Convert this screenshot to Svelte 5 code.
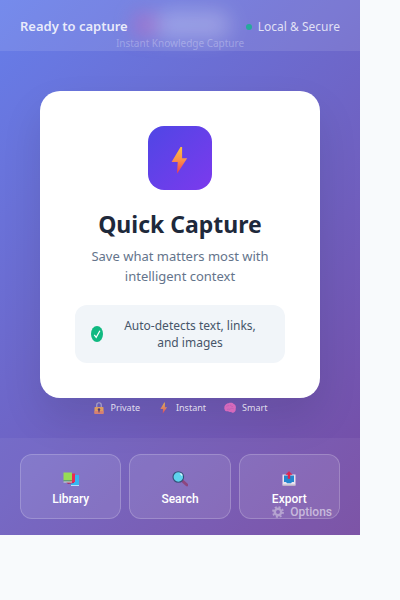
<script>
  const features = [
    { icon: 'lock', label: 'Private' },
    { icon: 'bolt', label: 'Instant' },
    { icon: 'brain', label: 'Smart' }
  ];
  const actions = [
    { icon: 'books', label: 'Library' },
    { icon: 'search', label: 'Search' },
    { icon: 'export', label: 'Export' }
  ];
</script>

{#snippet glyph(name)}
  <svg class="glyph" viewBox="0 0 16 16" aria-hidden="true">
    {#if name === 'lock'}
      <path d="M5 7V4a3 3 0 0 1 6 0V7" fill="none" stroke="#b9b4c9" stroke-width="1.600" />
      <rect x="2" y="6.500" width="12" height="9.500" rx="1" fill="#fbae4c" />
      <path d="M2 12h12v3a1 1 0 0 1-1 1H3a1 1 0 0 1-1-1z" fill="#f28a62" />
      <circle cx="8" cy="10" r="1.600" fill="#4c315c" />
      <path d="M7.300 10h1.400v4H7.300z" fill="#4c315c" />
    {:else if name === 'bolt'}
      <path d="M9.200.6H8.300L3.200 9.200h3.500L6.300 15.800 12.100 7H9.200z" fill="url(#bolt-fill)" />
    {:else if name === 'brain'}
      <path d="M.500 8C0 5 3 1.500 6 1.500c3-1 6-.5 7 1.300 2.500 1 3.500 4 2.500 6.200.5 2-.5 4.500-2.500 5-1.500.8-3 0-3.500-1-1.500.5-3 .3-4-.6-2.500.4-4.500-.4-4.500-2.400C.3 9.500.300 9 .500 8z" fill="#f06fc0" />
      <path d="M3 6c2-2 3 0 4-2m1 0c2 0 1 3 4 2M4 10c2-2 3 1 5-1 1-1 3 0 4 0" fill="none" stroke="#cf60b8" stroke-width="1" />
    {:else if name === 'books'}
      <path d="M8 4h8v10H8z" fill="#35b5f2" />
      <path d="M8 14h8v1H8z" fill="#b8e2fa" />
      <path d="m3 11 8-.5V12l-6 1z" fill="#a82b62" />
      <path d="M6 2.500h6v8.500l-5 1z" fill="#e92c55" />
      <path d="M.500 1.500h8.500v8H.500z" fill="#97dc55" />
      <path d="M.500 9.500h8.500v1H.500z" fill="#3d9a55" />
      <path d="M.500 10.500h8.500v1H.500z" fill="#d7e4d0" />
    {:else if name === 'search'}
      <path d="m10.500 10 4.500 4" stroke="#8d467f" stroke-width="3" stroke-linecap="round" />
      <circle cx="6.300" cy="6" r="5.300" fill="#5ed3ee" stroke="#354f78" stroke-width="1.100" />
      <path d="M8 3.200a1 1 0 0 1 1.500 1.600" fill="none" stroke="#d8f7ff" stroke-width="1.300" />
    {:else}
      <path d="M1.500 3.500h13V14a1 1 0 0 1-1 1h-11a1 1 0 0 1-1-1z" fill="#e8e3ef" />
      <path d="M3 4.500h10V11h-2l-1 1.200H6L5 11H3z" fill="#2586cf" />
      <path d="M2 13.500h12V15H2z" fill="#beb3c7" />
      <path d="M8 .500 5 3.500h2v4h2v-4h2z" fill="#df244f" stroke="#df244f" stroke-width=".5" />
    {/if}
  </svg>
{/snippet}

<svg class="defs" aria-hidden="true">
  <defs>
    <linearGradient id="bolt-fill" x1="0" y1="0" x2="0" y2="1">
      <stop offset="0" stop-color="#fdc13f" />
      <stop offset="0.500" stop-color="#fb8f4b" />
      <stop offset="1" stop-color="#f2394f" />
    </linearGradient>
  </defs>
</svg>

<div class="popup">
  <div class="brand-glow" aria-hidden="true"><span class="pink"></span><span class="white"></span></div>
  <header>
    <strong>Ready to capture</strong>
    <span class="status"><i></i>Local &amp; Secure</span>
  </header>
  <p class="tagline">Instant Knowledge Capture</p>

  <main>
    <section class="card">
      <div class="badge">{@render glyph('bolt')}</div>
      <h1>Quick Capture</h1>
      <p class="lead">Save what matters most with intelligent context</p>
      <div class="note">
        <svg class="check" viewBox="0 0 12 16" aria-hidden="true">
          <ellipse cx="6" cy="8" rx="6" ry="8" fill="#10b981" />
          <path d="m3.300 8.800 1.900 2.500L8.900 4.700" fill="none" stroke="#fff" stroke-width="1.200" />
        </svg>
        <span>Auto-detects text, links, and images</span>
      </div>
    </section>
    <ul class="features">
      {#each features as item}
        <li>{@render glyph(item.icon)}{item.label}</li>
      {/each}
    </ul>
  </main>

  <footer>
    {#each actions as item}
      <button type="button" class="action">{@render glyph(item.icon)}{item.label}</button>
    {/each}
  </footer>

  <button type="button" class="options">
    <svg viewBox="0 0 12 12" aria-hidden="true">
      <circle cx="6" cy="6" r="3.200" fill="none" stroke="#e3deea" stroke-width="2.400" />
      <circle cx="6" cy="6" r="5" fill="none" stroke="#e3deea" stroke-width="1.800" stroke-dasharray="2 1.927" />
    </svg>
    Options
  </button>
</div>

<style>
  :global(body) {
    margin: 0;
    background: #f8fafc;
    font-family: "Noto Sans", "Open Sans", sans-serif;
  }
  .defs {
    position: absolute;
    width: 0;
    height: 0;
  }
  .popup {
    position: relative;
    max-width: 360px;
    overflow: hidden;
    color: #fff;
    background: linear-gradient(135deg, #667eea 0%, #764ba2 100%);
  }
  header {
    position: relative;
    display: flex;
    justify-content: space-between;
    align-items: center;
    padding: 17px 20px 15px;
    background: rgba(255, 255, 255, 0.1);
    line-height: 19px;
    color: rgba(255, 255, 255, 0.85);
  }
  header strong {
    font-size: 13px;
    font-weight: 600;
  }
  .status {
    display: flex;
    align-items: center;
    gap: 6px;
    font-size: 12px;
    color: rgba(255, 255, 255, 0.78);
  }
  .status i {
    width: 6px;
    height: 6px;
    border-radius: 50%;
    background: #26aa9b;
  }
  .brand-glow {
    position: absolute;
    top: 0;
    left: 134px;
    display: flex;
    align-items: center;
    height: 50px;
    filter: blur(10px);
  }
  .pink {
    width: 22px;
    height: 22px;
    border-radius: 50%;
    background: rgba(220, 80, 170, 0.5);
  }
  .white {
    width: 74px;
    height: 28px;
    border-radius: 12px;
    background: rgba(255, 255, 255, 0.26);
  }
  .tagline {
    position: absolute;
    top: 36px;
    left: 0;
    right: 0;
    margin: 0;
    text-align: center;
    font-size: 10px;
    line-height: 14px;
    color: rgba(255, 255, 255, 0.28);
  }
  main {
    padding: 40px 40px 24px;
  }
  .card {
    padding: 35px;
    border-radius: 20px;
    background: #fff;
    box-shadow: 0 20px 40px rgba(0, 0, 0, 0.1);
    text-align: center;
  }
  .badge {
    display: grid;
    place-items: center;
    box-sizing: border-box;
    width: 64px;
    height: 64px;
    margin: 0 auto 18px;
    padding-top: 4px;
    border-radius: 16px;
    background: linear-gradient(135deg, #4f46e5, #7c3aed);
  }
  .badge .glyph {
    width: 28px;
    height: 28px;
  }
  h1 {
    margin: 0 0 6px;
    font-size: 23px;
    line-height: 32px;
    font-weight: 700;
    white-space: nowrap;
    color: #1e293b;
  }
  .lead {
    margin: 0 0 19px;
    font-size: 13px;
    line-height: 20px;
    color: #64748b;
  }
  .note {
    display: flex;
    align-items: center;
    gap: 8px;
    padding: 12px 16px;
    border-radius: 12px;
    background: #f1f5f9;
    font-size: 12px;
    line-height: 17px;
    color: #475569;
  }
  .note span {
    flex: 1;
    padding: 0 8px;
  }
  .check {
    flex: none;
    width: 12px;
    height: 16px;
  }
  .features {
    display: flex;
    justify-content: center;
    gap: 18px;
    margin: 0;
    padding: 3px 0 0;
    list-style: none;
    font-size: 9px;
    line-height: 13px;
    color: rgba(255, 255, 255, 0.8);
  }
  .features li {
    display: flex;
    align-items: center;
    gap: 6px;
  }
  .features .glyph {
    width: 12px;
    height: 12px;
    opacity: 0.8;
  }
  footer {
    position: relative;
    display: flex;
    gap: 8px;
    padding: 16px 20px;
    background: rgba(255, 255, 255, 0.05);
  }
  button {
    font-family: Roboto, "Liberation Sans", sans-serif;
    font-size: 12px;
    font-weight: 500;
    cursor: pointer;
  }
  .action {
    flex: 1;
    display: flex;
    flex-direction: column;
    align-items: center;
    gap: 4px;
    padding: 16px 8px 11px;
    border: 1px solid rgba(255, 255, 255, 0.2);
    border-radius: 12px;
    background: rgba(255, 255, 255, 0.1);
    line-height: 16px;
    color: #fff;
  }
  .action .glyph {
    width: 16px;
    height: 16px;
  }
  .options {
    position: absolute;
    right: 28px;
    bottom: 16px;
    display: flex;
    align-items: center;
    gap: 6px;
    padding: 0;
    border: 0;
    background: none;
    line-height: 14px;
    color: rgba(255, 255, 255, 0.55);
  }
  .options svg {
    width: 12px;
    height: 12px;
    opacity: 0.5;
  }
</style>
